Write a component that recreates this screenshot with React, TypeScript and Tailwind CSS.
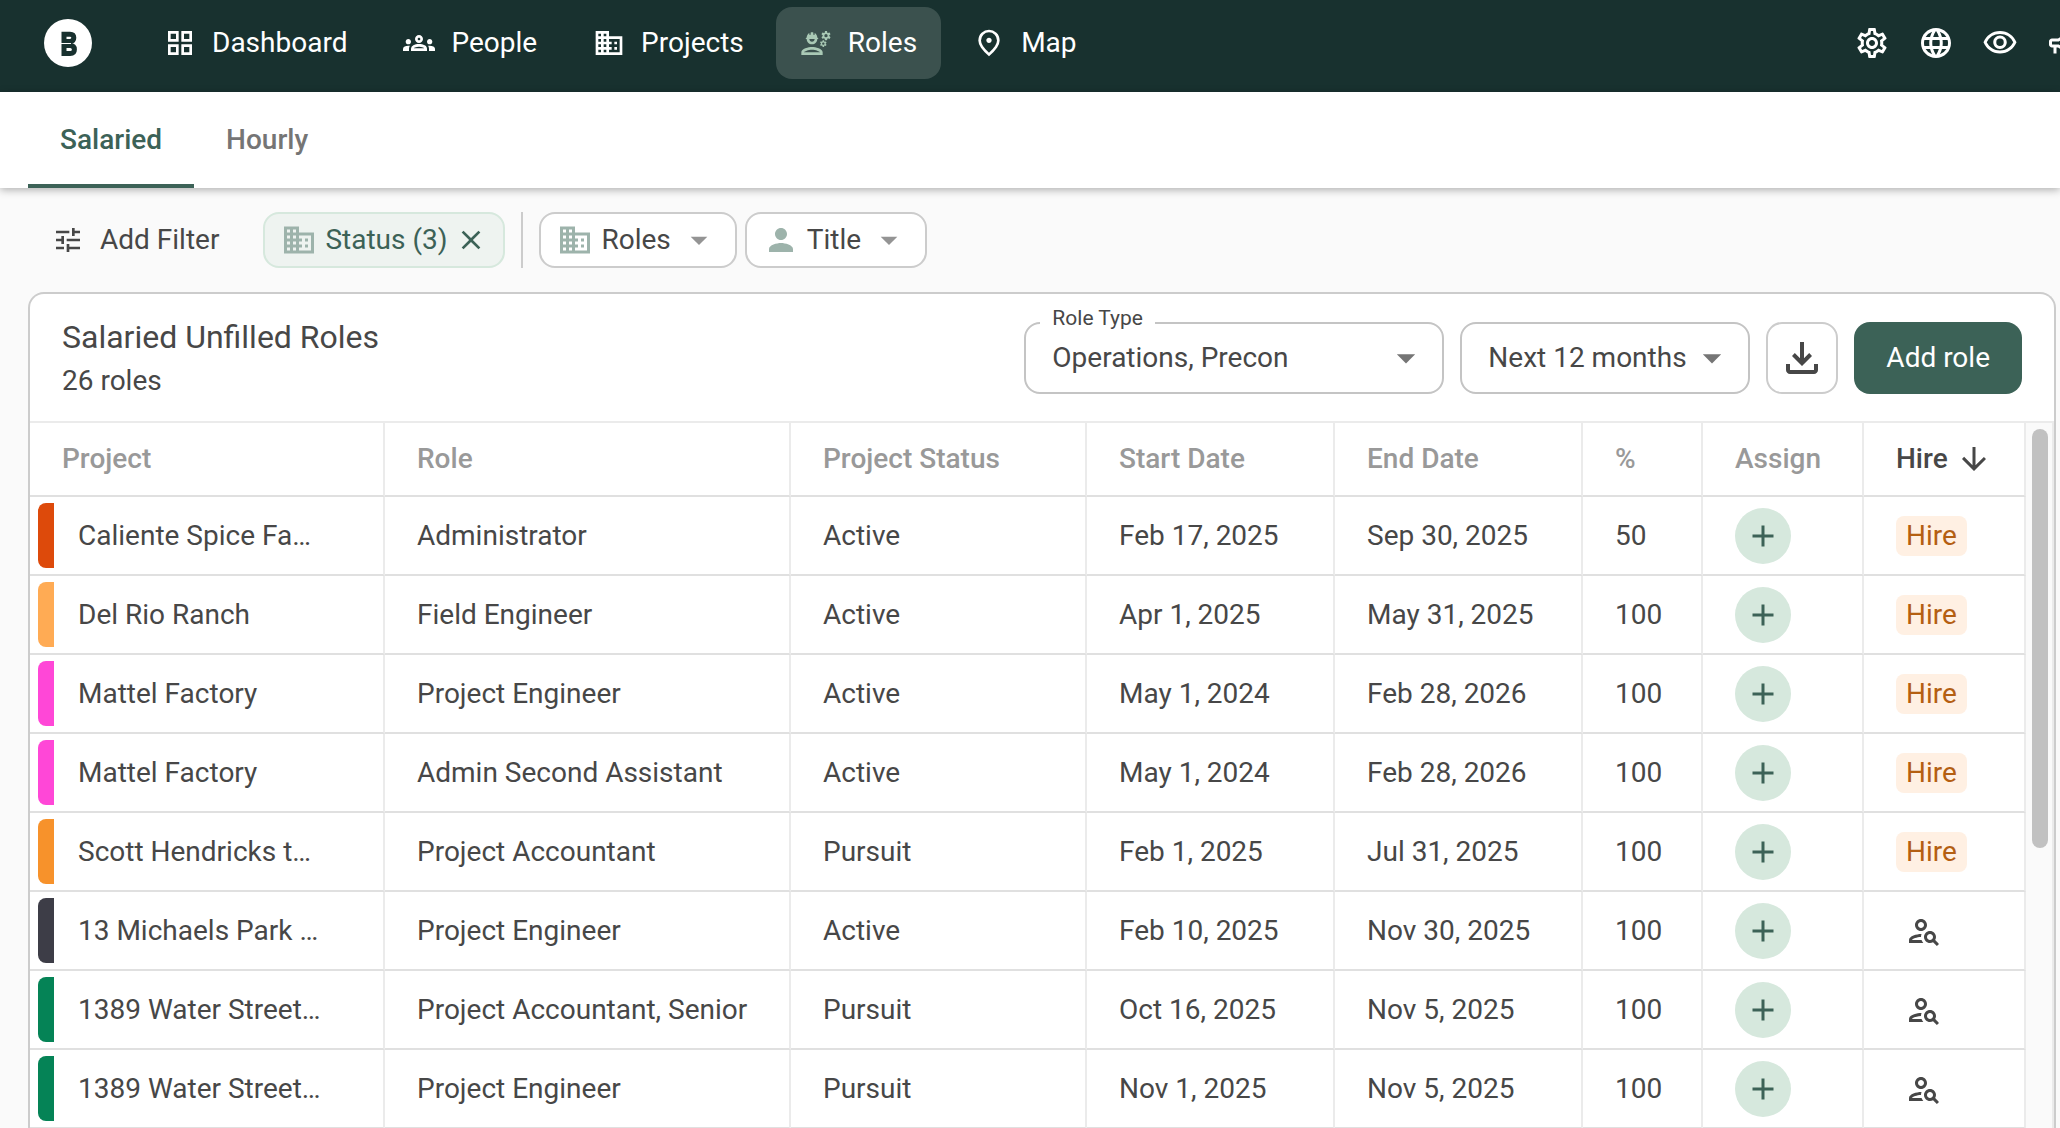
import {
  MdAdd,
  MdArrowDownward,
  MdArrowDropDown,
  MdBusiness,
  MdClose,
  MdLanguage,
  MdOutlineCampaign,
  MdOutlineEngineering,
  MdOutlineGridView,
  MdOutlineGroups,
  MdOutlinePersonSearch,
  MdOutlineSettings,
  MdOutlineVisibility,
  MdPerson,
  MdTune,
} from "react-icons/md";

const navLinks = [
  { label: "Dashboard", icon: MdOutlineGridView },
  { label: "People", icon: MdOutlineGroups },
  { label: "Projects", icon: MdBusiness },
  { label: "Roles", icon: MdOutlineEngineering, active: true },
  { label: "Map", icon: PinIcon },
];

const navActions = [
  { label: "Settings", icon: MdOutlineSettings },
  { label: "Language", icon: MdLanguage },
  { label: "Visibility", icon: MdOutlineVisibility },
  { label: "Announcements", icon: MdOutlineCampaign },
];

const columns = [
  { label: "Project", width: "w-[355px]" },
  { label: "Role", width: "w-[406px]" },
  { label: "Project Status", width: "w-[296px]" },
  { label: "Start Date", width: "w-[248px]" },
  { label: "End Date", width: "w-[248px]" },
  { label: "%", width: "w-[120px]" },
  { label: "Assign", width: "w-[161px]" },
  { label: "Hire", width: "w-[162px]", sorted: true },
];

const roles = [
  { color: "bg-[#dd4a0b]", project: "Caliente Spice Fa…", role: "Administrator", status: "Active", start: "Feb 17, 2025", end: "Sep 30, 2025", percent: 50, hire: true },
  { color: "bg-[#ffab54]", project: "Del Rio Ranch", role: "Field Engineer", status: "Active", start: "Apr 1, 2025", end: "May 31, 2025", percent: 100, hire: true },
  { color: "bg-[#ff47d7]", project: "Mattel Factory", role: "Project Engineer", status: "Active", start: "May 1, 2024", end: "Feb 28, 2026", percent: 100, hire: true },
  { color: "bg-[#ff47d7]", project: "Mattel Factory", role: "Admin Second Assistant", status: "Active", start: "May 1, 2024", end: "Feb 28, 2026", percent: 100, hire: true },
  { color: "bg-[#f7922b]", project: "Scott Hendricks t…", role: "Project Accountant", status: "Pursuit", start: "Feb 1, 2025", end: "Jul 31, 2025", percent: 100, hire: true },
  { color: "bg-[#3d3d47]", project: "13 Michaels Park …", role: "Project Engineer", status: "Active", start: "Feb 10, 2025", end: "Nov 30, 2025", percent: 100, hire: false },
  { color: "bg-[#058356]", project: "1389 Water Street…", role: "Project Accountant, Senior", status: "Pursuit", start: "Oct 16, 2025", end: "Nov 5, 2025", percent: 100, hire: false },
  { color: "bg-[#058356]", project: "1389 Water Street…", role: "Project Engineer", status: "Pursuit", start: "Nov 1, 2025", end: "Nov 5, 2025", percent: 100, hire: false },
];

function PinIcon({ className }: { className?: string }) {
  return (
    <svg viewBox="0 0 24 24" fill="currentColor" className={className} aria-hidden="true">
      <path d="M12 12q.825 0 1.413-.588T14 10t-.587-1.412T12 8t-1.412.588T10 10t.588 1.413T12 12m0 7.35q3.05-2.8 4.525-5.087T18 10.2q0-2.725-1.737-4.462T12 4 7.738 5.738 6 10.2q0 1.775 1.475 4.063T12 19.35M12 22q-4.025-3.425-6.012-6.362T4 10.2q0-3.75 2.413-5.975T12 2t5.588 2.225T20 10.2q0 2.5-1.987 5.438T12 22" />
    </svg>
  );
}

function DownloadIcon({ className }: { className?: string }) {
  return (
    <svg viewBox="0 0 24 24" fill="currentColor" className={className} aria-hidden="true">
      <path d="m12 16-5-5 1.4-1.45 2.6 2.6V4h2v8.15l2.6-2.6L17 11l-5 5zm-6 4q-.825 0-1.412-.587T4 18v-3h2v3h12v-3h2v3q0 .825-.587 1.413T18 20z" />
    </svg>
  );
}

function Logo() {
  return (
    <svg viewBox="0 0 48 48" className="size-12" aria-hidden="true">
      <circle cx="24" cy="24" r="24" fill="#fff" />
      <g fill="none" stroke="#18312f" strokeWidth="5">
        <path d="M20 15.2h6c2.600 0 3.800 1.400 3.800 3.600s-1.200 3.600-3.800 3.600h-6z" />
        <path d="M20 26.600h6.200c2.800 0 4.200 1.500 4.200 4s-1.400 4-4.200 4H20z" />
      </g>
      <path d="M17 24.500h10" stroke="#fff" strokeWidth="1" />
    </svg>
  );
}

function NavBar() {
  return (
    <header className="flex h-[92px] shrink-0 items-start justify-between overflow-hidden bg-[#18312f] pl-11 text-white">
      <div className="flex items-start gap-12">
        <a href="#" aria-label="Home" className="mt-[19px]">
          <Logo />
        </a>
        <nav className="mt-[7px] flex gap-2">
          {navLinks.map(({ label, icon: Icon, active }) => (
            <a
              key={label}
              href="#"
              className={`flex h-[72px] items-center gap-4 rounded-2xl px-6 ${active ? "bg-[#3b514e]" : ""}`}
            >
              <Icon className={`size-8 ${active ? "text-[#a9c9b5]" : ""}`} />
              {label}
            </a>
          ))}
        </nav>
      </div>
      <div className="mt-[25px] -mr-[22px] flex gap-7">
        {navActions.map(({ label, icon: Icon }) => (
          <button key={label} type="button" aria-label={label}>
            <Icon className="size-9" />
          </button>
        ))}
      </div>
    </header>
  );
}

function Tabs() {
  return (
    <div className="z-10 flex h-24 shrink-0 bg-white pl-7 font-medium shadow-[0_2px_8px_rgba(0,0,0,0.3)]">
      <button type="button" className="border-b-4 border-[#3c6257] px-8 pt-1 text-[#3c6257]">
        Salaried
      </button>
      <button type="button" className="border-b-4 border-transparent px-8 pt-1 text-[#757575]">
        Hourly
      </button>
    </div>
  );
}

function Filters() {
  return (
    <div className="flex shrink-0 items-center px-[52px] py-6">
      <button type="button" className="mr-11 flex items-center gap-4">
        <MdTune className="size-8" />
        Add Filter
      </button>
      <button
        type="button"
        className="flex h-14 items-center rounded-2xl border-2 border-[#d6e8dd] bg-[#eef3f0] px-4 text-[#3c6257]"
      >
        <MdBusiness className="mr-2 size-9 text-[#9db3ab]" />
        Status (3)
        <MdClose className="ml-2 size-8" />
      </button>
      <span className="mx-4 h-14 w-0.5 bg-[#ccc]" />
      <div className="flex gap-2">
        <button type="button" className="flex h-14 items-center rounded-2xl border-2 border-[#ccc] bg-white px-4">
          <MdBusiness className="mr-2 size-9 text-[#9db3ab]" />
          Roles
          <MdArrowDropDown className="ml-2 size-10 text-[#949494]" />
        </button>
        <button type="button" className="flex h-14 items-center rounded-2xl border-2 border-[#ccc] bg-white px-4">
          <MdPerson className="mr-2 size-9 text-[#9db3ab]" />
          Title
          <MdArrowDropDown className="ml-2 size-10 text-[#949494]" />
        </button>
      </div>
    </div>
  );
}

function Toolbar() {
  return (
    <div className="flex h-[129px] shrink-0 items-start justify-between border-b-2 border-[#ebebeb] px-8 pt-7">
      <div className="-mt-[5px]">
        <h1 className="text-[32px] leading-10">Salaried Unfilled Roles</h1>
        <p className="mt-1 leading-10">26 roles</p>
      </div>
      <div className="flex gap-4">
        <div className="relative w-[420px]">
          <label htmlFor="role-type" className="absolute -top-4 left-4 bg-white px-3 text-[21px] leading-6">
            Role Type
          </label>
          <select
            id="role-type"
            className="h-[72px] w-full appearance-none rounded-2xl border-2 border-[#c4c4c4] bg-white pl-[26px]"
          >
            <option>Operations, Precon</option>
          </select>
          <MdArrowDropDown className="pointer-events-none absolute top-3.5 right-4 size-11 text-[#757575]" />
        </div>
        <div className="relative w-[290px]">
          <select
            aria-label="Period"
            className="h-[72px] w-full appearance-none rounded-2xl border-2 border-[#c4c4c4] bg-white pl-[26px]"
          >
            <option>Next 12 months</option>
          </select>
          <MdArrowDropDown className="pointer-events-none absolute top-3.5 right-4 size-11 text-[#757575]" />
        </div>
        <button
          type="button"
          aria-label="Download"
          className="flex size-[72px] items-center justify-center rounded-2xl border-2 border-[#ccc]"
        >
          <DownloadIcon className="size-12" />
        </button>
        <button type="button" className="h-[72px] rounded-2xl bg-[#3c6257] px-8 text-white">
          Add role
        </button>
      </div>
    </div>
  );
}

function RolesTable() {
  return (
    <div className="flex min-h-0 flex-1 overflow-hidden">
      <table className="min-w-0 flex-1 table-fixed border-separate border-spacing-0 self-start">
        <thead>
          <tr>
            {columns.map((column) => (
              <th
                key={column.label}
                className={`h-[74px] border-r-2 border-b-2 border-r-[#ebebeb] border-b-[#e0e0e0] px-8 text-left font-medium ${column.width} ${column.sorted ? "text-[#474747]" : "text-[#999]"}`}
              >
                {column.sorted ? (
                  <button type="button" className="flex items-center gap-2">
                    {column.label}
                    <MdArrowDownward className="size-9" />
                  </button>
                ) : (
                  column.label
                )}
              </th>
            ))}
          </tr>
        </thead>
        <tbody className="[&_td]:h-[79px] [&_td]:border-r-2 [&_td]:border-b-2 [&_td]:border-r-[#ebebeb] [&_td]:border-b-[#e0e0e0] [&_td]:px-8 [&_td]:whitespace-nowrap">
          {roles.map((row, index) => (
            <tr key={index}>
              <td>
                <div className="-ml-6 flex items-center gap-6">
                  <span className={`h-[65px] w-4 shrink-0 rounded-l-lg ${row.color}`} />
                  {row.project}
                </div>
              </td>
              <td>{row.role}</td>
              <td>{row.status}</td>
              <td>{row.start}</td>
              <td>{row.end}</td>
              <td>{row.percent}</td>
              <td>
                <button
                  type="button"
                  aria-label="Assign"
                  className="flex size-14 items-center justify-center rounded-full bg-[#d6e8dd] text-[#3c6257]"
                >
                  <MdAdd className="size-9" />
                </button>
              </td>
              <td>
                {row.hire ? (
                  <button type="button" className="block h-10 rounded-lg bg-[#fff0e3] px-2.5 leading-10 text-[#b45f12]">
                    Hire
                  </button>
                ) : (
                  <button type="button" aria-label="Find candidate" className="block pl-2.5">
                    <MdOutlinePersonSearch className="size-9" />
                  </button>
                )}
              </td>
            </tr>
          ))}
        </tbody>
      </table>
      <div className="w-7 border-r-2 border-[#ebebeb] bg-[#fafafa] px-1.5 pt-1.5">
        <div className="h-[419px] w-4 rounded-full bg-[#c1c1c1]" />
      </div>
    </div>
  );
}

export default function App() {
  return (
    <div className="flex h-screen flex-col overflow-hidden bg-[#fafafa] font-[Roboto,sans-serif] text-[28px] leading-10 text-[#474747]">
      <NavBar />
      <Tabs />
      <Filters />
      <main className="mr-1 ml-7 flex min-h-0 flex-1 flex-col overflow-hidden rounded-t-2xl border-2 border-b-0 border-[#ccc] bg-white">
        <Toolbar />
        <RolesTable />
      </main>
    </div>
  );
}
